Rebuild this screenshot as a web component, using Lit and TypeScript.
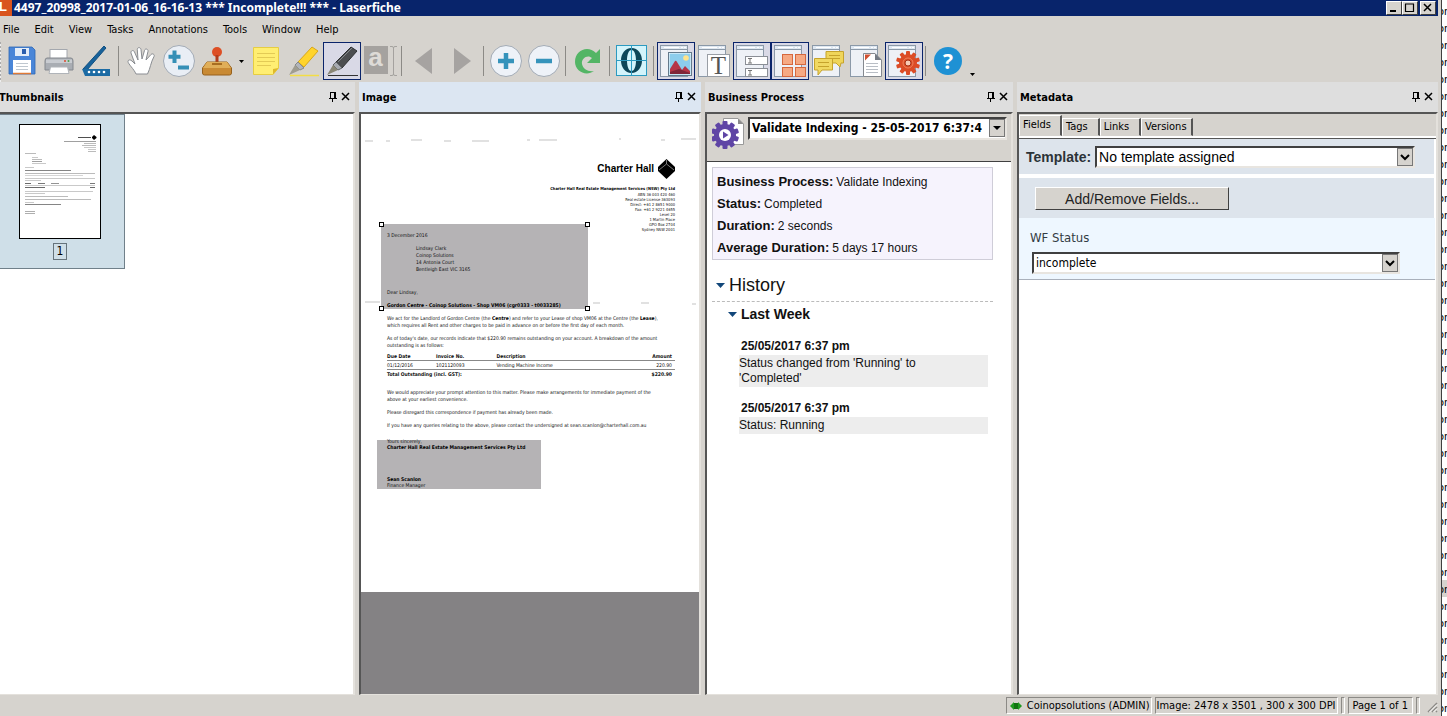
import { LitElement, html, css, svg, nothing } from "lit";
import { customElement, property } from "lit/decorators.js";
import { classMap } from "lit/directives/class-map.js";

const frame = svg`
  <rect x="3.5" y="3.5" width="27" height="31" fill="#eef1f6" stroke="#8b99a8"/>
  <rect x="4" y="4" width="26" height="3" fill="#dfe8f2"/>
  <path d="M4 7.5H30" stroke="#8b99a8"/>
  <path d="M7 5.500H22M24 5.500H26M27 5.500H29" stroke="#fff"/>`;

const gearTeeth = (cx: number, cy: number, r: number, count: number, w: number, fill: string) =>
  Array.from({ length: count }, (_, i) =>
    svg`<rect x=${cx - w / 2} y=${cy - r} width=${w} height=${r} rx="1" fill=${fill} transform="rotate(${(i * 360) / count} ${cx} ${cy})"/>`);

const icons: Record<string, unknown> = {
  save: svg`
    <path d="M7 5H30L33 8V32H7Z" fill="#4a86d8" stroke="#2d67b5" stroke-width=".8"/>
    <rect x="13" y="6" width="14" height="8" fill="#e4edf8"/><rect x="20" y="7" width="4" height="5" fill="#2c5fae"/>
    <rect x="11" y="18" width="18" height="14" fill="#fff"/><path d="M14 21.500H26M14 24.500H26M14 27.500H26" stroke="#bfc7cf"/>
    <path d="M11 31.500H29" stroke="#e07a35" stroke-width="1.500"/>`,
  print: svg`
    <rect x="10" y="7.500" width="17" height="10" fill="#fff" stroke="#a4a8ae"/>
    <path d="M7 16H31Q33 16 33 19V28H5V19Q5 16 7 16Z" fill="#a9adb3" stroke="#85898f"/>
    <path d="M6 17.500H32V21H6Z" fill="#c9ccd1"/><circle cx="25" cy="19" r="1" fill="#d8492d"/><circle cx="28.500" cy="19" r="1" fill="#4aa04a"/>
    <path d="M10.500 25H27.500L29 31.500H9Z" fill="#fff" stroke="#b0b4b9"/>`,
  scan: svg`
    <path d="M5 27L26 4L28 6L9 28Z" fill="#17629b" stroke="#124f80"/>
    <path d="M4 27H32V34H7Z" fill="#1c6ba4"/>
    <g fill="#fff"><circle cx="11" cy="30" r="1.300"/><circle cx="16" cy="30" r="1.300"/><circle cx="21" cy="30" r="1.300"/><circle cx="26" cy="30" r="1.300"/></g>`,
  hand: svg`
    <path d="M14 32C12 27 6 22 6 19.500C6 17.500 8.500 17.500 10 19L13 22L9 11C8.500 8.500 11.600 7.500 12.500 10L16 18L15.300 7.500C15.300 5 18.600 5 19 7.500L20 17L22.500 8.500C23.200 6 26.400 7 26 9.300L24 18L29 12.500C30.500 11 33 12.500 32 14.500C28.500 21 28.500 26 25.500 32Z"
      fill="#fff" stroke="#8a8d92" stroke-width="1"/>`,
  zoom: svg`
    <circle cx="19" cy="19" r="15.500" fill="#e9eef5" stroke="#a3abb5"/>
    <path d="M14.500 8.500V21M8.500 14.700H20.500" stroke="#358fb6" stroke-width="4"/><path d="M18 25.500H29" stroke="#358fb6" stroke-width="4"/>`,
  stamp: svg`
    <circle cx="19" cy="10" r="5" fill="#dd4f25"/><path d="M17.500 13H20.500V22H17.500Z" fill="#b33c1c"/>
    <path d="M9 20H29L33.500 26V31Q33.500 33 31.500 33H6.500Q4.500 33 4.500 31V26Z" fill="#c98a34" stroke="#97611c"/>
    <path d="M9 20H29L33 26H5Z" fill="#e0ae58"/><path d="M14 22H24" stroke="#a86d21" stroke-width="2"/>`,
  note: svg`
    <path d="M6.500 5.500H31.500V26L26 32.500H6.500Z" fill="#ffee72" stroke="#e6cd43"/><path d="M31.500 26L26 32.500V27Z" fill="#dfb92b"/>
    <path d="M10 11.500H28M10 15.500H28M10 19.500H28M10 23.500H24" stroke="#e3cb55"/>`,
  highlight: svg`
    <path d="M13 20L27 5L33 9L19 25Z" fill="#ffd42c" stroke="#d8a617"/><path d="M10 23L13 20L19 26L15 28Z" fill="#b2b5ba" stroke="#85888c"/>
    <path d="M10 23L4 33L15 28Z" fill="#a09d90"/><path d="M5 33.500H34" stroke="#f3dd45" stroke-width="1.500"/>`,
  redact: svg`
    <path d="M13 20L28 5L34 9L19 26Z" fill="#4b4d4f" stroke="#2e3031"/><path d="M15 20L29 6" stroke="#85888a"/>
    <path d="M10 23L13 20L19 26L15 28Z" fill="#a7aab0" stroke="#606367"/><path d="M10 23L4 33L15 28Z" fill="#8a8776"/><path d="M5 33.500H35" stroke="#333" stroke-width="1"/>`,
  nav: svg`<path d="M10 19L27 6V32Z" fill="#a6a3a1"/>`,
  navnext: svg`<path d="M28 19L11 6V32Z" fill="#a6a3a1"/>`,
  plus: svg`<circle cx="19" cy="19" r="15.500" fill="#eef2f8" stroke="#a3abb5"/><path d="M19 11V27M11 19H27" stroke="#3593bb" stroke-width="4.500"/>`,
  minus: svg`<circle cx="19" cy="19" r="15.500" fill="#eef2f8" stroke="#a3abb5"/><path d="M11 19H27" stroke="#3593bb" stroke-width="4.500"/>`,
  redo: svg`<path d="M31 7V21H18L23 16C19 12 12 16 13 22C14 27 19 30 25 29C17 35 6 29 6 20C6 8 19 3 27 11Z" fill="#53b565"/>`,
  globe: svg`
    <rect x="3.500" y="3.500" width="30" height="30" fill="#d3f4fb" stroke="#2c9ac0"/>
    <path fill-rule="evenodd" d="M18.500 6C12 6 8 12 8 18.500S12 31 18.500 31S29 25 29 18.500S25 6 18.500 6ZM18.500 8C21.500 8 23 13 23 18.500S21.500 29 18.500 29S14 24 14 18.500S15.500 8 18.500 8Z" fill="#0d4658"/>
    <path d="M4 18.500H33M18.500 4V33" stroke="#2c9ac0"/>`,
  image: svg`${frame}
    <rect x="12" y="11" width="22" height="22" fill="#8ccdec" stroke="#fff"/><rect x="11.500" y="10.500" width="23" height="23" fill="none" stroke="#647a8c"/>
    <circle cx="29" cy="16" r="2.800" fill="#ffe38a"/><path d="M13 27L18 19Q19 18 20 20L25 28L28 24L33 29V32H13Z" fill="#b53546"/><path d="M13 30L22 27L33 31V32H13Z" fill="#7f2538"/>`,
  pane: frame,
  fields: svg`${frame}
    <g fill="#fff" stroke="#8b8f96"><rect x="12.500" y="14.500" width="22" height="8"/><rect x="12.500" y="26.500" width="22" height="8"/></g>
    <path d="M15 16.500H19M17 16.500V21M15 21H19M15 28.500H19M17 28.500V33M15 33H19" stroke="#777" fill="none"/>`,
  thumbs: svg`${frame}
    <g fill="#f6a983" stroke="#d6683e"><rect x="11.500" y="12.500" width="10" height="10"/><rect x="24.500" y="12.500" width="10" height="10"/><rect x="11.500" y="25.500" width="10" height="9"/><rect x="24.500" y="25.500" width="10" height="9"/></g>`,
  comments: svg`${frame}
    <path d="M17 9.500H34.500V21H32L31 25L27 21H17Z" fill="#efd55a" stroke="#c6a32c"/><path d="M5.500 16.500H23.500V28H13L9 33V28H5.500Z" fill="#f1d962" stroke="#c6a32c"/>
    <path d="M20 13.500H31M20 16.500H31M9 20.500H20M9 24.500H20" stroke="#c6a32c"/>`,
  doc: svg`${frame}
    <path d="M16.500 11.500H28L34.500 18V34.500H16.500Z" fill="#fff" stroke="#85898f"/><path d="M28 11.500V18H34.500Z" fill="#747a83"/>
    <path d="M18 12.500H24L18 18.500Z" fill="#d15031"/><path d="M19 21.500H31M19 24.500H31M19 27.500H31M19 30.500H31" stroke="#b9bec5"/>`,
  gear: svg`${frame}${gearTeeth(23, 21, 12, 10, 4, "#dc4c26")}<circle cx="23" cy="21" r="9" fill="#dc4c26"/><circle cx="23" cy="21" r="5" fill="none" stroke="#f0825a" stroke-width="1"/><circle cx="23" cy="21" r="3" fill="#f7cbb6" stroke="#a53115"/>`,
};

@customElement("tool-button")
export class ToolButton extends LitElement {
  @property() icon = "";
  @property() label = "";
  @property({ type: Boolean }) pressed = false;
  static styles = css`
    :host { display: block; flex: none; }
    button { display: grid; place-items: center; box-sizing: border-box; width: 38px; height: 38px; padding: 0; border: 1px solid transparent; background: none; }
    .on { border: 1px solid #0a246a; background: #d9d9e6; }
    svg { display: block; width: 36px; height: 36px; }
    .letter { display: flex; gap: 2px; }
    .letter svg { width: 7px; height: 30px; }
    .a { width: 24px; height: 28px; background: #a5a29f; color: #dedbd7; font: bold 26px/22px "Liberation Sans", sans-serif; }
    .q { width: 28px; height: 28px; border-radius: 50%; background: #1e91d4; color: #fff; font: bold 21px/28px "Open Sans", sans-serif; }
    .t { grid-area: 1/1; width: 23px; height: 23px; margin: 8px 0 0 9px; border: 1px solid #999ea5; background: #fff; color: #555; font: 25px/22px "Liberation Serif", serif; box-sizing: border-box; }
    .pane { grid-area: 1/1; }
  `;
  private art() {
    if (this.icon === "text-a") return html`<span class="letter"><span class="a">a</span><svg viewBox="0 0 7 30"><path d="M0 .5H2Q3.500 .5 3.500 2Q3.500 .5 5 .5H7M3.500 2V28M0 29.500H2Q3.500 29.500 3.500 28Q3.500 29.500 5 29.500H7" fill="none" stroke="#a5a29f"/></svg></span>`;
    if (this.icon === "help") return html`<span class="q">?</span>`;
    if (this.icon === "text-pane") return html`<svg class="pane" viewBox="1 1 36 36">${icons.pane}</svg><span class="t">T</span>`;
    return html`<svg viewBox="1 1 36 36">${icons[this.icon]}</svg>`;
  }
  render() {
    return html`<button class=${classMap({ on: this.pressed })} aria-label=${this.label} aria-pressed=${this.pressed ? "true" : "false"}>${this.art()}</button>`;
  }
}

@customElement("dock-panel")
export class DockPanel extends LitElement {
  @property() heading = "";
  @property({ type: Boolean }) active = false;
  static styles = css`
    :host { display: flex; flex-direction: column; min-width: 0; min-height: 0; }
    header { display: flex; align-items: center; flex: none; height: 30px; padding: 0 3px; background: #dedede; }
    .active { background: #dce6f2; }
    h2 { flex: 1; margin: 0; padding-top: 2px; font: bold 11px/14px "DejaVu Sans Condensed", "DejaVu Sans", sans-serif; }
    button { display: block; width: 13px; height: 14px; padding: 0; border: 0; background: none; }
    svg { display: block; width: 13px; height: 12px; }
    .body { flex: 1; min-height: 0; display: flex; flex-direction: column; overflow: hidden; background: #fff; border: 2px solid; border-color: #555 #e4e1dc #e4e1dc #555; border-bottom-width: 1px; }
  `;
  render() {
    return html`
      <header class=${classMap({ active: this.active })}>
        <h2>${this.heading}</h2>
        <button aria-label="Pin ${this.heading}"><svg viewBox="0 0 13 12"><path d="M4.500 1V7M3 7.500H11M4.500 1.500H9M8.500 1V7M9.500 1V7M6.500 8V11" fill="none" stroke="#000"/></svg></button>
        <button aria-label="Close ${this.heading}"><svg viewBox="0 0 13 12"><path d="M3 2L10 9M10 2L3 9" stroke="#000" stroke-width="1.500"/></svg></button>
      </header>
      <div class="body"><slot></slot></div>`;
  }
}

@customElement("letter-page")
export class LetterPage extends LitElement {
  static styles = css`
    :host { display: block; flex: none; position: relative; z-index: 0; box-sizing: border-box; aspect-ratio: 2478 / 3501; padding: 45px 24px 0 26px; background: #fff; color: #111; font: 5px/7px "DejaVu Sans Condensed", "DejaVu Sans", sans-serif; white-space: nowrap; }
    p { margin: 6px 0 0; }
    .brand { display: flex; justify-content: flex-end; align-items: center; gap: 4px; height: 20px; font: bold 10px/20px "Liberation Sans", sans-serif; color: #000; }
    .brand svg { width: 17px; height: 20px; }
    .sender { margin-top: 7px; text-align: right; font-size: 4px; line-height: 5px; }
    .sender b { display: block; line-height: 6px; color: #000; }
    .date { margin-top: 0; }
    .to { margin-left: 29px; }
    .dear { margin-top: 16px; }
    b { color: #000; }
    table { width: 100%; margin-top: 3px; border-collapse: collapse; table-layout: fixed; }
    th, td { padding: 0; text-align: left; height: 8px; line-height: 8px; }
    .item td { border-top: 1px solid #888; border-bottom: 1px solid #888; }
    .num { text-align: right; padding-right: 3px; }
    .c1 { width: 17%; } .c2 { width: 21%; } .c4 { width: 20%; }
    .ask { margin-top: 11px; }
    .sign { margin-top: 9px; line-height: 6px; }
    .name { margin-top: 26px; line-height: 6px; }
    .mark { position: absolute; z-index: -1; background: #b5b3b5; }
    .m1 { left: 20px; top: 110px; width: 207px; height: 85px; }
    .m2 { left: 16px; top: 326px; width: 164px; height: 49px; }
    .m1 i { position: absolute; width: 3px; height: 3px; border: 1px solid #000; background: #fff; }
    .nw { left: -2px; top: -2px; } .ne { right: -2px; top: -2px; } .sw { left: -2px; bottom: -2px; } .se { right: -2px; bottom: -2px; }
    .scan { position: absolute; left: 0; width: 100%; height: 4px; z-index: -2; }
    .s1 { top: 24px; } .s2 { top: 187px; }
  `;
  render() {
    return html`
      <svg class="scan s1" viewBox="0 0 338 4" preserveAspectRatio="none"><path d="M4 3H12M25 3H29M50 2H61M83 3H90M111 3H128M166 2H169M178 2H196M258 1H260M300 2H304M320 1H335" stroke="#aaa" stroke-width=".7"/></svg>
      <svg class="scan s2" viewBox="0 0 338 4" preserveAspectRatio="none"><path d="M4 1H19M32 2H38M232 2H239M280 2H288M331 3H335" stroke="#aaa" stroke-width=".7"/></svg>
      <div class="mark m1"><i class="nw"></i><i class="ne"></i><i class="sw"></i><i class="se"></i></div>
      <div class="mark m2"></div>
      <div class="brand">Charter Hall
        <svg viewBox="0 0 17 20"><path d="M8.500 0L17 8V12L8.500 20L0 12V8Z" fill="#000"/><path d="M1 11L8.500 5L16 11M8.500 1V5" fill="none" stroke="#aaa" stroke-width=".7"/></svg>
      </div>
      <div class="sender"><b>Charter Hall Real Estate Management Services (NSW) Pty Ltd</b>ABN 36 003 420 460<br>Real estate License 363093<br>Direct: +61 2 8651 9000<br>Fax: +61 2 9221 4655<br>Level 20<br>1 Martin Place<br>GPO Box 2704<br>Sydney NSW 2001</div>
      <p class="date">3 December 2016</p>
      <p class="to">Lindsay Clark<br>Coinop Solutions<br>14 Antonia Court<br>Bentleigh East VIC 3165</p>
      <p class="dear">Dear Lindsay,</p>
      <p><b>Gordon Centre - Coinop Solutions - Shop VM06 (cgr0333 - t0033285)</b></p>
      <p>We act for the Landlord of Gordon Centre (the <b>Centre</b>) and refer to your Lease of shop VM06 at the Centre (the <b>Lease</b>),<br>which requires all Rent and other charges to be paid in advance on or before the first day of each month.</p>
      <p>As of today's date, our records indicate that $220.90 remains outstanding on your account. A breakdown of the amount<br>outstanding is as follows:</p>
      <table>
        <tr><th class="c1">Due Date</th><th class="c2">Invoice No.</th><th>Description</th><th class="c4 num">Amount</th></tr>
        <tr class="item"><td>01/12/2016</td><td>1021120093</td><td>Vending Machine Income</td><td class="num">220.90</td></tr>
        <tr><th colspan="3">Total Outstanding (incl. GST):</th><th class="num">$220.90</th></tr>
      </table>
      <p class="ask">We would appreciate your prompt attention to this matter. Please make arrangements for immediate payment of the<br>above at your earliest convenience.</p>
      <p>Please disregard this correspondence if payment has already been made.</p>
      <p>If you have any queries relating to the above, please contact the undersigned at sean.scanlon@charterhall.com.au</p>
      <p class="sign">Yours sincerely,<br><b>Charter Hall Real Estate Management Services Pty Ltd</b></p>
      <p class="name"><b>Sean Scanlon</b><br>Finance Manager</p>`;
  }
}

interface Tool { icon: string; label: string; on?: boolean; menu?: boolean }
const toolGroups: Tool[][] = [
  [{ icon: "save", label: "Save" }, { icon: "print", label: "Print" }, { icon: "scan", label: "Scan" }],
  [{ icon: "hand", label: "Pan" }, { icon: "zoom", label: "Zoom" }, { icon: "stamp", label: "Stamp", menu: true }, { icon: "note", label: "Sticky note" }, { icon: "highlight", label: "Highlight" }, { icon: "redact", label: "Redact", on: true }, { icon: "text-a", label: "Text annotation" }],
  [{ icon: "nav", label: "Previous page" }, { icon: "navnext", label: "Next page" }],
  [{ icon: "plus", label: "Zoom in" }, { icon: "minus", label: "Zoom out" }],
  [{ icon: "redo", label: "Rotate" }],
  [{ icon: "globe", label: "OCR" }],
  [{ icon: "image", label: "Image pane", on: true }, { icon: "text-pane", label: "Text pane" }, { icon: "fields", label: "Metadata pane", on: true }, { icon: "thumbs", label: "Thumbnails pane", on: true }, { icon: "comments", label: "Comments pane" }, { icon: "doc", label: "Document pane" }, { icon: "gear", label: "Business process pane", on: true }],
  [{ icon: "help", label: "Help", menu: true }],
];

const thumbLines: [number, number, number, string][] = [
  [58, 12, 13, "#222"], [44, 16, 32, "#888"], [64, 18, 12, "#aaa"], [62, 20, 14, "#aaa"], [64, 22, 12, "#bbb"], [68, 24, 8, "#bbb"], [68, 26, 8, "#aaa"],
  [5, 28, 11, "#aaa"], [12, 32, 6, "#bbb"], [12, 34, 10, "#aaa"], [12, 36, 10, "#888"], [12, 38, 14, "#bbb"], [5, 42, 9, "#bbb"],
  [5, 45, 46, "#666"], [5, 48, 70, "#aaa"], [5, 50, 58, "#ccc"], [5, 53, 70, "#bbb"], [5, 55, 16, "#bbb"],
  [5, 58, 6, "#444"], [18, 58, 7, "#555"], [31, 58, 8, "#777"], [70, 58, 5, "#555"], [5, 60, 70, "#bbb"], [5, 62, 20, "#444"], [70, 62, 5, "#444"],
  [5, 66, 68, "#bbb"], [5, 68, 20, "#bbb"], [5, 71, 43, "#aaa"], [5, 74, 66, "#aaa"], [5, 77, 9, "#bbb"], [5, 79, 36, "#666"], [5, 86, 10, "#999"], [5, 88, 10, "#999"],
];

@customElement("app-root")
export class AppRoot extends LitElement {
  static styles = css`
    :host { display: flex; height: 100vh; overflow: hidden; background: #fff; color: #000; font: 11px/14px "DejaVu Sans Condensed", "DejaVu Sans", sans-serif; }
    .window { flex: 1; min-width: 0; display: flex; flex-direction: column; background: #d6d3ce; border-right: 1px solid #404040; }
    .behind { flex: none; width: 5px; padding-top: 2px; overflow: hidden; background: #fff; }
    .behind div { height: 17px; line-height: 19px; text-indent: -4px; white-space: nowrap; }
    .behind .sel { background: #d6d3ce; }
    .title { display: flex; align-items: center; height: 16px; margin-right: 3px; background: #08246b; color: #fff; }
    .logo { width: 12px; height: 16px; background: #d9541e; font: bold 13px/14px "Liberation Sans", sans-serif; text-indent: -1px; overflow: hidden; }
    h1 { flex: 1; margin: 0 0 0 2px; font: bold 12px/14px "Noto Sans", sans-serif; }
    .title button { display: block; width: 16px; height: 14px; padding: 0; border: 1px solid; border-color: #fff #404040 #404040 #fff; background: #d6d3ce; }
    .title .close { margin: 0 2px; }
    .title svg { display: block; width: 14px; height: 12px; }
    nav { display: flex; gap: 15px; height: 26px; padding-left: 3px; align-items: center; }
    nav button { padding: 2px 0 0; border: 0; background: none; font: inherit; }
    .tools { display: flex; height: 40px; padding-left: 2px; background-image: linear-gradient(#aaa 50%, #eee 50%); background-size: 1px 4px; background-repeat: repeat-y; }
    .sep { flex: none; width: 1px; height: 30px; margin: 4px 3px 0 2px; background: #8c8a86; }
    .drop { width: 11px; height: 38px; padding: 0; border: 0; background: none; }
    .drop svg { display: block; width: 11px; height: 38px; }
    main { flex: 1; min-height: 0; display: grid; grid-template-columns: minmax(0, 359fr) minmax(0, 342fr) minmax(0, 308fr) minmax(0, 421fr); grid-template-rows: minmax(0, 1fr); gap: 4px; margin: 0 3px 0 -4px; }
    .thumb { display: flex; flex-direction: column; align-items: center; gap: 4px; box-sizing: border-box; width: 127px; height: 155px; padding: 9px 2px 0 0; border: 1px solid #70808a; border-left: 0; background: #cfdfe8; }
    .thumb svg { width: 80px; height: 113px; border: 1px solid #000; background: #fff; }
    .thumb span { padding: 0 3px; border: 1px solid #66747c; font-size: 12px; line-height: 15px; }
    .canvas { flex: 1; background: #848284; }
    .bp-head { display: flex; align-items: flex-start; gap: 4px; height: 48px; padding: 3px 4px 0 5px; box-sizing: border-box; background: #d6d3ce; border-bottom: 1px solid #404040; flex: none; }
    .bp-head svg.proc { flex: none; width: 32px; height: 34px; }
    .combo { position: relative; display: flex; min-width: 0; }
    .combo select { appearance: none; width: 100%; box-sizing: border-box; height: 22px; margin: 0; padding: 0 20px 0 2px; border: 2px solid; border-color: #404040 #e8e5e0 #e8e5e0 #404040; border-radius: 0; background: #fff; color: #000; font: 14px/16px "Liberation Sans", sans-serif; }
    .combo svg { position: absolute; right: 2px; top: 2px; width: 16px; height: 18px; box-sizing: border-box; border: 1px solid; border-color: #eee #555 #555 #eee; outline: 1px solid #777; outline-offset: -1px; background: #d6d3ce; pointer-events: none; }
    .proc-pick { flex: 1; }
    .proc-pick select { height: 23px; font: bold 12px/17px "DejaVu Sans Condensed", "DejaVu Sans", sans-serif; text-overflow: clip; padding-right: 14px; }
    .bp { padding: 5px 18px 0 5px; font: 12px/15px "Liberation Sans", sans-serif; color: #111; }
    dl { margin: 0; padding: 3px 4px 0; border: 1px solid #cfcdd8; background: #f6f3fd; }
    dl div { display: flex; gap: 3px; height: 22px; line-height: 22px; }
    dt { font-weight: bold; font-size: 13px; } dd { margin: 0; }
    h3, h4, h5 { margin: 0; display: flex; align-items: center; }
    h3 { gap: 4px; margin-top: 15px; padding: 0 0 6px 4px; border-bottom: 1px dashed #bbb; font-size: 18px; font-weight: normal; line-height: 20px; }
    h3 svg, h4 svg { width: 9px; height: 5px; }
    h4 { gap: 4px; margin: 4px 0 0 16px; font-size: 14px; line-height: 17px; }
    h5 { margin: 16px 0 2px 29px; font-size: 12px; line-height: 14px; }
    .log { margin: 0 5px 0 27px; padding: 1px 0; background: #ededed; }
    .log + h5 { margin-top: 14px; }
    .tabs { display: flex; align-items: flex-end; flex: none; height: 22px; background: #d6d3ce; border-bottom: 2px solid #fff; outline: 1px solid #555; }
    .tabs button { height: 18px; padding: 0 10px 0 3px; border: 1px solid; border-color: #fff #555 transparent #fff; border-right-width: 2px; background: none; font: inherit; }
    .tabs .cur { height: 21px; padding: 0 9px 2px 3px; }
    .tabs .last { padding-right: 4px; }
    .tpl { display: flex; align-items: center; gap: 4px; flex: none; height: 36px; box-sizing: border-box; margin-right: 2px; padding: 1px 19px 0 7px; background: #dde4ec; border-top: 1px solid #555; }
    .tpl label { font: bold 14px/18px "Liberation Sans", sans-serif; color: #2c3338; }
    .tpl .combo { flex: 1; }
    .add { flex: none; height: 40px; box-sizing: border-box; margin: 4px 2px 0 0; padding: 9px 0 0 16px; background: #dde4ec; }
    .add button { display: block; width: 194px; height: 23px; padding: 0; border: 1px solid; border-color: #fff #404040 #404040 #fff; background: #d6d3ce; font: 14px/18px "Liberation Sans", sans-serif; color: #222; }
    .wf { flex: none; margin-right: 1px; padding: 11px 35px 5px 11px; background: #eef7ff; border-bottom: 1px solid #a9b0bb; }
    .wf label { display: block; margin-bottom: 5px; font-size: 13px; line-height: 18px; color: #333c44; }
    .wf .combo { margin-left: 2px; }
    .wf select { font: 12px/16px "DejaVu Sans Condensed", "DejaVu Sans", sans-serif; }
    footer { display: flex; justify-content: flex-end; flex: none; gap: 3px; height: 17px; padding: 2px 2px 2px 0; line-height: 15px; }
    footer div { display: flex; align-items: center; gap: 5px; padding: 0 1px; border: 1px solid; border-color: #8c8a86 #fff #fff #8c8a86; white-space: nowrap; }
    footer .page { padding: 0 4px; }
    footer .user svg { width: 12px; height: 8px; margin-left: 2px; }
    footer .grip { width: 14px; height: 17px; margin-left: 2px; }
  `;

  private arrow = html`<svg viewBox="0 0 9 5"><path d="M0 0H9L4.500 5Z" fill="#12477a"/></svg>`;
  private drop(label: string, y: number) {
    return html`<button class="drop" aria-label=${label}><svg viewBox="0 0 11 38"><path d="M3 ${y}H8L5.500 ${y + 3}Z" fill="#000"/></svg></button>`;
  }
  private chevron = html`<svg viewBox="0 0 14 16"><path d="M3 6L7 10L11 6" fill="none" stroke="#000" stroke-width="2"/></svg>`;

  render() {
    return html`
      <div class="window">
        <div class="title">
          <span class="logo">L</span>
          <h1>4497_20998_2017-01-06_16-16-13 *** Incomplete!!! *** - Laserfiche</h1>
          <button aria-label="Minimize"><svg viewBox="0 0 14 12"><path d="M3 9H9" stroke="#000" stroke-width="2"/></svg></button>
          <button aria-label="Maximize"><svg viewBox="0 0 14 12"><path d="M2.500 2V9.500H10.500V2M2 2H11" fill="none" stroke="#000" stroke-width="1.200"/></svg></button>
          <button class="close" aria-label="Close"><svg viewBox="0 0 14 12"><path d="M3 2L10 9M10 2L3 9" stroke="#000" stroke-width="1.500"/></svg></button>
        </div>
        <nav>${["File", "Edit", "View", "Tasks", "Annotations", "Tools", "Window", "Help"].map((m) => html`<button>${m}</button>`)}</nav>
        <div class="tools">
          ${toolGroups.map((group, i) => html`
            ${i ? html`<span class="sep"></span>` : nothing}
            ${group.map((t) => html`<tool-button icon=${t.icon} label=${t.label} ?pressed=${t.on}></tool-button>${t.menu ? this.drop(`${t.label} options`, t.icon === "help" ? 31 : 18) : nothing}`)}`)}
        </div>
        <main>
          <dock-panel heading="Thumbnails">
            <div class="thumb">
              <svg viewBox="0 0 80 113" role="img" aria-label="Page 1 thumbnail">
                ${thumbLines.map(([x, y, w, c]) => svg`<path d="M${x} ${y + 0.5}h${w}" stroke=${c} stroke-width=".8"/>`)}
                <path d="M74 10l2.500 2v1l-2.500 2l-2-2v-1z" fill="#000"/>
              </svg>
              <span>1</span>
            </div>
          </dock-panel>
          <dock-panel heading="Image" active><letter-page></letter-page><div class="canvas"></div></dock-panel>
          <dock-panel heading="Business Process">
            <div class="bp-head">
              <svg class="proc" viewBox="0 0 32 34">
                <path d="M11.500 1.500H26L31.500 7V27.500H11.500Z" fill="#fff" stroke="#999"/><path d="M26 1.500V7H31.500Z" fill="#8b8b8b"/>
                ${gearTeeth(13, 18, 14, 10, 5, "#5f45a5")}<circle cx="13" cy="18" r="11" fill="#5f45a5"/><circle cx="13" cy="18" r="6" fill="#fff"/><path d="M11 14.500L16.500 18L11 21.500Z" fill="#5f45a5"/>
              </svg>
              <div class="combo proc-pick">
                <select aria-label="Process instance"><option>Validate Indexing - 25-05-2017 6:37:4</option></select>
                <svg viewBox="0 0 14 16"><path d="M3 6H11L7 10Z" fill="#000"/></svg>
              </div>
            </div>
            <div class="bp">
              <dl>
                <div><dt>Business Process:</dt><dd>Validate Indexing</dd></div>
                <div><dt>Status:</dt><dd>Completed</dd></div>
                <div><dt>Duration:</dt><dd>2 seconds</dd></div>
                <div><dt>Average Duration:</dt><dd>5 days 17 hours</dd></div>
              </dl>
              <h3>${this.arrow}History</h3>
              <h4>${this.arrow}Last Week</h4>
              <h5>25/05/2017 6:37 pm</h5>
              <div class="log">Status changed from 'Running' to<br>'Completed'</div>
              <h5>25/05/2017 6:37 pm</h5>
              <div class="log">Status: Running</div>
            </div>
          </dock-panel>
          <dock-panel heading="Metadata">
            <div class="tabs" role="tablist">
              <button role="tab" class="cur" aria-selected="true">Fields</button><button role="tab">Tags</button><button role="tab">Links</button><button role="tab" class="last">Versions</button>
            </div>
            <div class="tpl"><label for="tpl">Template:</label><div class="combo"><select id="tpl"><option>No template assigned</option></select>${this.chevron}</div></div>
            <div class="add"><button>Add/Remove Fields...</button></div>
            <div class="wf"><label for="wf">WF Status</label><div class="combo"><select id="wf"><option>incomplete</option></select>${this.chevron}</div></div>
          </dock-panel>
        </main>
        <footer>
          <div class="user"><svg viewBox="0 0 12 8"><path d="M0 4L4 0V2.500H8V0L12 4L8 8V5.500H4V8Z" fill="#1f9a1f"/><path d="M4 1H8V7H4Z" fill="#117311"/></svg>Coinopsolutions (ADMIN)</div>
          <div>Image: 2478 x 3501 , 300 x 300 DPI</div><div class="gap"></div><div class="page">Page 1 of 1</div><div class="gap"></div>
          <svg class="grip" viewBox="0 0 14 17"><path d="M3 15L12 6M7 15L12 10M11 15L12 14" stroke="#8c8a86" stroke-width="1.500"/><path d="M4.500 15L12 7.500M8.500 15L12 11.500" stroke="#fff"/></svg>
        </footer>
      </div>
      <div class="behind" aria-hidden="true">${Array.from({ length: 42 }, (_, i) => html`<div class=${classMap({ sel: i === 34 })}>or</div>`)}</div>`;
  }
}
